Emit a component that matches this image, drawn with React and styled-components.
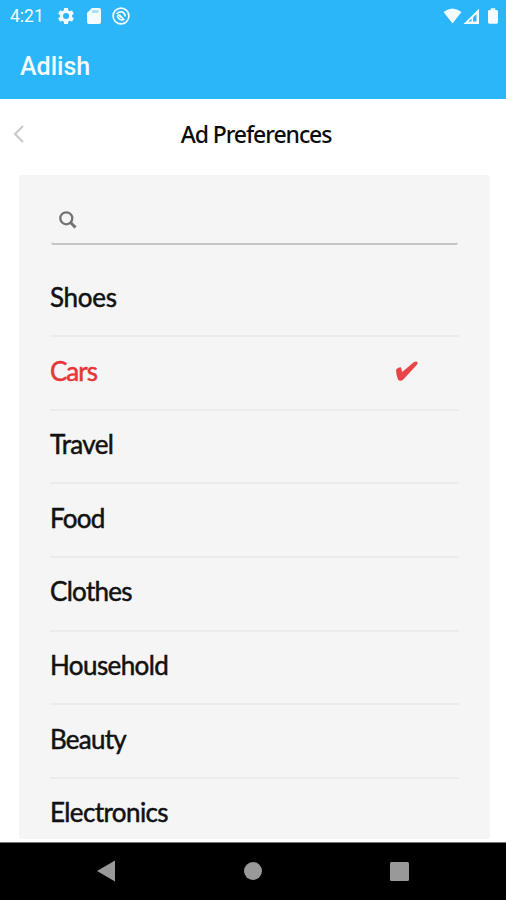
import React from "react";
import styled, { createGlobalStyle } from "styled-components";

const GlobalStyle = createGlobalStyle`
  * { box-sizing: border-box; }
  body { margin: 0; background: #fff; }
`;

const Screen = styled.div`
  width: 506px;
  height: 900px;
  display: flex;
  flex-direction: column;
  overflow: hidden;
  background: #fff;
  font-family: Lato, sans-serif;
  color: #111;
`;

const Header = styled.header`
  height: 99px;
  flex: none;
  background: #2bb6fa;
  color: #f4fcff;
  font-family: Roboto, sans-serif;
`;

const StatusBar = styled.div`
  height: 32px;
  display: flex;
  justify-content: space-between;
  padding: 0 8px 0 10px;
`;

const StatusGroup = styled.div`
  display: flex;
  align-items: center;
`;

const Clock = styled.time`
  width: 46px;
  font-size: 17.5px;
  line-height: 32px;
  letter-spacing: 0;
`;

const Icon = styled.svg`
  display: block;
  flex: none;
  margin-left: ${(p) => p.$gap || 0}px;
`;

const AppName = styled.h1`
  margin: 0;
  padding-left: 20px;
  font-size: 25px;
  font-weight: 500;
  line-height: 69px;
  letter-spacing: 0;
`;

const TitleBar = styled.div`
  height: 76px;
  flex: none;
  display: grid;
  grid-template-columns: 40px 1fr 34px;
  align-items: center;
  padding-bottom: 7px;
`;

const BackButton = styled.button`
  border: 0;
  padding: 0 0 0 13px;
  background: none;
`;

const Title = styled.h2`
  margin: 0;
  text-align: center;
  font-family: "Noto Sans", sans-serif;
  font-size: 23px;
  line-height: 32px;
  font-weight: 500;
  letter-spacing: -1.08px;
  color: #0c0c0c;
`;

const Panel = styled.main`
  height: 664px;
  flex: none;
  margin: 0 16px 3px 19px;
  padding: 20px 31px 0;
  border-radius: 2px;
  overflow: hidden;
  background: #f5f5f5;
`;

const SearchField = styled.label`
  height: 50px;
  display: flex;
  align-items: center;
  padding: 2px 0 0 7px;
  border: solid transparent;
  border-width: 0 2px 2px;
  border-bottom-color: #c4c4c4;
  border-radius: 4px;
`;

const SearchInput = styled.input`
  flex: 1;
  min-width: 0;
  border: 0;
  outline: 0;
  background: none;
  font: 20px Lato, sans-serif;
`;

const List = styled.ul`
  margin: 0;
  padding: 18.7px 0 0;
  list-style: none;
`;

const Row = styled.li`
  height: 73.6px;
  display: flex;
  align-items: center;
  justify-content: space-between;
  padding: 0 40px 5px 0;
  border-bottom: 2px solid #ebebeb;
  color: ${(p) => (p.$selected ? "#e73538" : "#111")};
`;

const Label = styled.span`
  font-size: 26px;
  line-height: 32px;
  letter-spacing: ${(p) => p.$tracking}px;
  -webkit-text-stroke: 0.5px currentColor;
`;

const NavBar = styled.nav`
  flex: 1;
  display: grid;
  grid-template-columns: 1fr 80px 1fr;
  align-items: center;
  padding-bottom: 1px;
  background: #000;
  border-top: 1px solid #777;
`;

const NavButton = styled.button`
  display: flex;
  justify-content: ${(p) => p.$align};
  border: 0;
  padding: ${(p) => p.$pad};
  background: none;
`;

const items = [
  { name: "Shoes", tracking: -0.3 },
  { name: "Cars", tracking: -1, selected: true },
  { name: "Travel", tracking: -0.7 },
  { name: "Food", tracking: -0.8 },
  { name: "Clothes", tracking: -0.7 },
  { name: "Household", tracking: -0.6 },
  { name: "Beauty", tracking: -0.75 },
  { name: "Electronics", tracking: -0.6 },
];

const gearPath =
  "M19.14 12.94c.04-.3.06-.61.06-.94s-.02-.64-.07-.94l2.03-1.58c.18-.14.23-.41.12-.61l-1.92-3.32c-.12-.22-.37-.29-.59-.22l-2.39.96c-.5-.38-1.03-.7-1.62-.94L14.4 2.81C14.36 2.57 14.16 2.4 13.92 2.4h-3.84c-.24 0-.43.17-.47.41L9.25 5.35c-.59.24-1.13.57-1.62.94l-2.39-.96c-.22-.08-.47 0-.59.22L2.74 8.87c-.12.21-.08.47.12.61l2.03 1.58c-.05.3-.09.63-.09.94s.02.64.07.94l-2.03 1.58c-.18.14-.23.41-.12.61l1.92 3.32c.12.22.37.29.59.22l2.39-.96c.5.38 1.03.7 1.62.94l.36 2.54c.05.24.24.41.48.41h3.84c.24 0 .44-.17.47-.41l.36-2.54c.59-.24 1.13-.56 1.62-.94l2.39.96c.22.08.47 0 .59-.22l1.92-3.32c.12-.22.07-.47-.12-.61l-2.01-1.58zM12 15.6A3.6 3.6 0 1 1 12 8.4a3.6 3.6 0 0 1 0 7.2z";

export default function App() {
  return (
    <>
      <GlobalStyle />
      <Screen>
        <Header>
          <StatusBar>
            <StatusGroup>
              <Clock>4:21</Clock>
              <Icon width="20" height="20" viewBox="0 0 24 24" fill="currentColor">
                <path d={gearPath} />
              </Icon>
              <Icon $gap={11} width="14" height="16" viewBox="0 0 14 16">
                <path d="M5 0h7q2 0 2 2v12q0 2-2 2H2q-2 0-2-2V5z" fill="currentColor" />
                <path d="M5 2h6.500v3H5z" fill="#a5e1fd" />
              </Icon>
              <Icon $gap={11} width="18" height="18" viewBox="0 0 18 18" fill="none" stroke="currentColor">
                <circle cx="9" cy="9" r="7.900" strokeWidth="1.700" />
                <path d="M4.600 7C7 3.600 12.500 4 13.300 9.500" strokeWidth="1.700" />
                <path d="M4.700 9.200C5.600 6.600 8 7 9.200 8.600L13 12.800C10 14.700 5.500 13.500 4.700 9.200z" fill="currentColor" stroke="none" />
                <path d="M6.300 9.500q1.300 2.200 3.600 2" stroke="#2bb6fa" strokeWidth="1" />
              </Icon>
            </StatusGroup>
            <StatusGroup>
              <Icon width="19" height="16" viewBox="0 0 19 16" fill="currentColor">
                <path d="M.5 4Q9.5-3 18.5 4L9.5 15.5z" />
              </Icon>
              <Icon $gap={1} width="17" height="17" viewBox="0 0 17 17">
                <path d="M.5 16H16V.8z" fill="currentColor" />
                <path d="M10 9.500l3.500-3.500V13.500H10z" fill="#2bb6fa" />
                <path d="M5.500 13.500l3-3v3z" fill="#2bb6fa" />
              </Icon>
              <Icon $gap={8} width="10" height="16" viewBox="0 0 11 17" fill="currentColor">
                <path d="M3 0h5v2h1.500Q11 2 11 3.500v12Q11 17 9.500 17h-8Q0 17 0 15.500v-12Q0 2 1.500 2H3z" />
              </Icon>
            </StatusGroup>
          </StatusBar>
          <AppName>Adlish</AppName>
        </Header>
        <TitleBar>
          <BackButton aria-label="Back">
            <Icon width="12" height="20" viewBox="0 0 12 20" fill="none" stroke="#c9c9c9" strokeWidth="2">
              <path d="M10 2L2 10l8 8" />
            </Icon>
          </BackButton>
          <Title>Ad Preferences</Title>
        </TitleBar>
        <Panel>
          <SearchField>
            <Icon width="18" height="18" viewBox="0 0 18 18" fill="none" stroke="#727272">
              <circle cx="7.300" cy="7.300" r="6" strokeWidth="2.300" />
              <path d="M11.500 11.500l5 5" strokeWidth="3" />
            </Icon>
            <SearchInput aria-label="Search" />
          </SearchField>
          <List>
            {items.map((item) => (
              <Row key={item.name} $selected={item.selected}>
                <Label $tracking={item.tracking}>{item.name}</Label>
                {item.selected && (
                  <Icon width="24" height="22" viewBox="0 0 24 22">
                    <path
                      d="M1 9.500Q3.500 7 6 7.200L7.200 12 19 2q2.500-1.300 3.500.2.500 1.600-.8 2.900L7.800 20q-2.400 1.600-4.600 0Q1 15 1 9.500z"
                      fill="#e8444a"
                    />
                  </Icon>
                )}
              </Row>
            ))}
          </List>
        </Panel>
        <NavBar>
          <NavButton $align="flex-start" $pad="0 0 0 97px" aria-label="Back">
            <Icon width="18" height="22" viewBox="0 0 18 22" fill="#999">
              <path d="M0 11L18 .5v21z" />
            </Icon>
          </NavButton>
          <NavButton $align="center" $pad="0" aria-label="Home">
            <Icon width="18" height="18" viewBox="0 0 18 18" fill="#999">
              <circle cx="9" cy="9" r="9" />
            </Icon>
          </NavButton>
          <NavButton $align="flex-end" $pad="0 97px 0 0" aria-label="Recent apps">
            <Icon width="19" height="19" viewBox="0 0 19 19" fill="#999">
              <rect width="19" height="19" rx="1.500" />
            </Icon>
          </NavButton>
        </NavBar>
      </Screen>
    </>
  );
}
